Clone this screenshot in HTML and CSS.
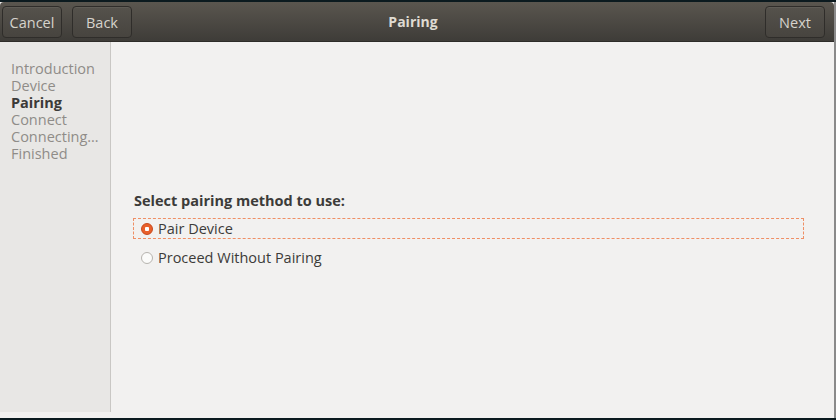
FILE: index.html
```html
<!DOCTYPE html>
<html>
<head>
<meta charset="utf-8">
<link rel="stylesheet" href="styles.css">
</head>
<body>
<div class="window">
  <header class="headerbar">
    <div class="left">
      <button class="btn">Cancel</button>
      <button class="btn">Back</button>
    </div>
    <div class="title">Pairing</div>
    <div class="right">
      <button class="btn">Next</button>
    </div>
  </header>
  <div class="body">
    <aside class="sidebar">
      <div class="step">Introduction</div>
      <div class="step">Device</div>
      <div class="step current">Pairing</div>
      <div class="step">Connect</div>
      <div class="step">Connecting…</div>
      <div class="step">Finished</div>
    </aside>
    <main class="content">
      <div class="label">Select pairing method to use:</div>
      <div class="option focused">
        <span class="radio checked"></span>
        <span class="opt-text">Pair Device</span>
      </div>
      <div class="option">
        <span class="radio"></span>
        <span class="opt-text">Proceed Without Pairing</span>
      </div>
    </main>
  </div>
</div>
</body>
</html>
```

FILE: styles.css
```css
html, body {
  margin: 0;
  padding: 0;
}
body {
  width: 836px;
  height: 420px;
  background: #0b1a1f;
  font-family: "Open Sans", "DejaVu Sans", sans-serif;
  overflow: hidden;
}
.window {
  margin-top: 2px;
  width: 834px;
  height: 416px;
  background: #f2f1f0;
  display: flex;
  flex-direction: column;
  border-right: 2px solid #8a8a8a;
  box-sizing: content-box;
}
.headerbar {
  height: 40px;
  flex: none;
  background: linear-gradient(#5a564f, #3e3c38);
  border-bottom: 1px solid #2e2c29;
  box-sizing: border-box;
  display: flex;
  align-items: center;
  padding: 0 9px 0 2px;
  position: relative;
  border-radius: 4px 4px 0 0;
}
.left, .right {
  display: flex;
  gap: 10px;
  align-items: center;
}
.right {
  margin-left: auto;
}
.title {
  position: absolute;
  left: 0;
  right: 8px;
  text-align: center;
  font-weight: 700;
  font-size: 14px;
  color: #dfdbd2;
  pointer-events: none;
}
.btn {
  width: 60px;
  height: 32px;
  margin-top: 1px;
  border: 1px solid #2f2d2a;
  border-radius: 4px;
  background: linear-gradient(#55524c, #47443f);
  box-shadow: inset 0 1px 0 rgba(255,255,255,0.06);
  color: #d6d3cc;
  font-family: "Open Sans", "DejaVu Sans", sans-serif;
  font-size: 14.5px;
  padding: 0;
}
.body {
  flex: 1;
  display: flex;
  padding-bottom: 6px;
}
.sidebar {
  width: 111px;
  background: #e8e7e5;
  border-right: 1px solid #c9c7c4;
  padding: 18px 0 0 11px;
  box-sizing: border-box;
  flex: none;
}
.step {
  font-size: 14.5px;
  line-height: 17px;
  height: 17px;
  color: #8f8c88;
  white-space: nowrap;
}
.step.current {
  color: #3b3a38;
  font-weight: 700;
}
.content {
  flex: 1;
  padding: 150px 30px 0 22px;
}
.label {
  font-size: 14.5px;
  font-weight: 700;
  color: #3c3b39;
  line-height: 18px;
  margin-left: 1px;
  margin-bottom: 8px;
}
.option {
  display: flex;
  align-items: center;
  height: 19px;
  margin-bottom: 8px;
  padding-left: 7px;
  border: 1px dashed transparent;
  font-size: 14.5px;
  color: #3c3b39;
}
.option.focused {
  border-color: #ef8f65;
}
.radio {
  width: 12px;
  height: 12px;
  border-radius: 50%;
  border: 1px solid #b7b4af;
  background: #fbfbfa;
  box-sizing: border-box;
  margin-right: 5px;
  flex: none;
}
.radio.checked {
  border: 1px solid #c8471a;
  background: radial-gradient(circle, #ffffff 0 2px, #e9602b 2.5px);
}
.opt-text {
  line-height: 19px;
}
```
